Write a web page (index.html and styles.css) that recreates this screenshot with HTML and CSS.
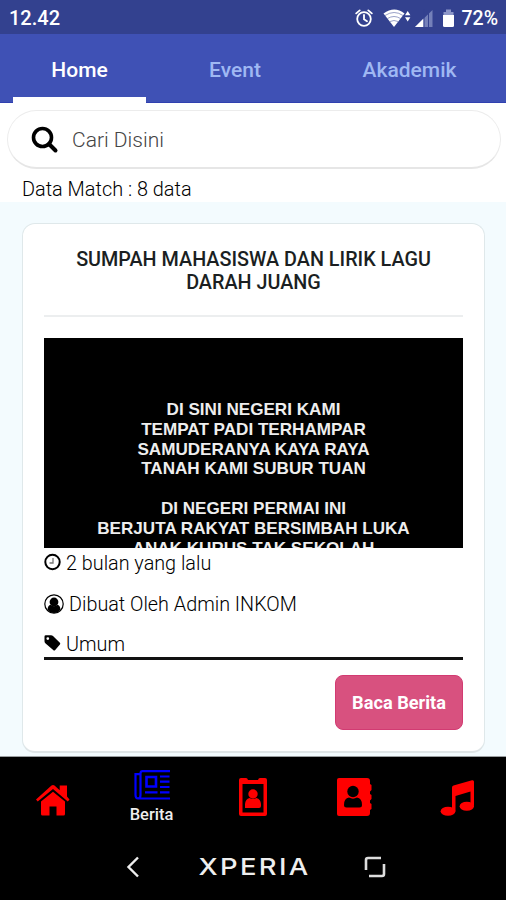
FILE: index.html
```html
<!DOCTYPE html>
<html lang="id">
<head>
    <meta charset="UTF-8">
    <title>Berita</title>
    <link rel="stylesheet" href="styles.css">
</head>
<body>
<div class="phone">
    <div class="status">
        <span class="time">12.42</span>
        <svg class="status-icons" width="102" height="24" viewBox="0 0 102 24">
            <!-- alarm -->
            <g fill="none" stroke="#fff" stroke-width="1.8" stroke-linecap="round">
                <circle cx="9" cy="13" r="6.8"/>
                <path d="M9 9v4.3l3 2M1.2 7.4l3.5-3M16.8 7.4l-3.5-3"/>
            </g>
            <!-- wifi -->
            <path fill="#fff" d="M28.500 7.500Q39.500 -.5 49.500 7.500L39 21z"/>
            <path fill="none" stroke="#33418f" stroke-width=".5" d="M30 9.500q9.300-6 18 0M32.500 12.500q6.500-4 13 0M35 15.500q4-2 8 0"/>
            <path fill="#fff" d="M50 9.300l2.700-4.200 2.700 4.200zM50 11.300l2.700 4.200 2.700-4.200z"/>
            <!-- signal -->
            <path fill="#7480b9" d="M60 21L77.500 4v17z"/>
            <path fill="#fff" d="M60 21l8.500-8.500V21z"/>
            <path stroke="#33418f" d="M69 3v18M73.500 3v18"/>
            <!-- battery -->
            <path fill="#8c96c8" d="M88.500 9V6h2.500V3.500h5V6h2.500v3z"/>
            <path fill="#fff" d="M88 9h11v10.500a1.500 1.500 0 0 1-1.500 1.500h-8a1.500 1.500 0 0 1-1.500-1.500z"/>
        </svg>
        <span class="percent">72%</span>
    </div>
    <div class="tabs">
        <div class="tab active">Home</div>
        <div class="tab">Event</div>
        <div class="tab">Akademik</div>
    </div>
    <div class="top">
        <div class="search">
            <svg width="28" height="28" viewBox="0 0 28 28" fill="none" stroke="#000">
                <circle cx="11.500" cy="11.500" r="9" stroke-width="3.600"/>
                <path d="M18 18l6.500 6.500" stroke-width="4" stroke-linecap="round"/>
            </svg>
            <span class="placeholder">Cari Disini</span>
        </div>
        <div class="match">Data Match : 8 data</div>
    </div>
    <div class="list">
        <div class="card">
            <h2 class="title">SUMPAH MAHASISWA DAN LIRIK LAGU DARAH JUANG</h2>
            <div class="picture">
                <p>DI SINI NEGERI KAMI</p>
                <p>TEMPAT PADI TERHAMPAR</p>
                <p>SAMUDERANYA KAYA RAYA</p>
                <p>TANAH KAMI SUBUR TUAN</p>
                <p>&nbsp;</p>
                <p>DI NEGERI PERMAI INI</p>
                <p>BERJUTA RAKYAT BERSIMBAH LUKA</p>
                <p>ANAK KURUS TAK SEKOLAH</p>
            </div>
            <div class="meta">
                <svg width="17" height="18" viewBox="0 0 17 18" fill="none" stroke="#000">
                    <circle cx="8.500" cy="9" r="7.200" stroke-width="2"/>
                    <path d="M9 5v5H5.500" stroke="#777" stroke-width="1.300"/>
                </svg>
                <span class="when">2 bulan yang lalu</span>
            </div>
            <div class="meta">
                <svg width="20" height="20" viewBox="0 0 20 20">
                    <circle cx="10" cy="10" r="9.200" fill="none" stroke="#000" stroke-width="1.200"/>
                    <circle cx="10" cy="8" r="4.400"/>
                    <path d="M3.500 15.500q.3-4 3.200-4.700 3.300 2.800 6.600 0 2.900.7 3.200 4.700Q14 19 10 19t-6.500-3.500z"/>
                </svg>
                <span class="author">Dibuat Oleh Admin INKOM</span>
            </div>
            <div class="meta">
                <svg width="17" height="18" viewBox="0 0 17 18">
                    <path fill-rule="evenodd" d="M.5 2.500a1.300 1.300 0 0 1 1.300-1.300H7q1.200 0 2 .8l6.900 6.700q.8.900 0 1.800l-4.700 5.500q-1 1-2 0L1.600 9.400Q.5 8.400.5 7.200zM3.800 3.200a1.400 1.400 0 1 0 0 2.800 1.400 1.400 0 0 0 0-2.800z"/>
                </svg>
                <span class="kind">Umum</span>
            </div>
            <div class="action">
                <button class="btn">Baca Berita</button>
            </div>
        </div>
    </div>
    <div class="nav">
        <div class="item">
            <svg width="36" height="34" viewBox="0 0 36 34" fill="red">
                <path d="M1 16.500L16.500 2.600q1.500-1.300 3 0l5.200 4.600V2.500H32v11l2.500 3-1.700 2L18 6 2.700 18.500z"/>
                <path d="M6 18.500L18 8.700l12 9.800V31q0 1.500-1.500 1.500h-7v-9h-7v9h-7Q6 32.500 6 31z"/>
            </svg>
        </div>
        <div class="item current">
            <svg width="36" height="32" viewBox="0 0 36 32" fill="none" stroke="#00f" stroke-width="2.200">
                <path d="M36 2.200H8.500Q6.500 2.200 6.500 4.500V26q0 3.500-2.500 3.500T1.500 26V5.200h5M4 29.500h32"/>
                <path d="M12.500 8h9.500v9.500h-9.500z" stroke-width="2.600"/>
                <path d="M26 7.500h9.500M26 12.700h9.500M26 18h9.500M11 23.300h12.500M26 23.300h9.500"/>
            </svg>
            <span>Berita</span>
        </div>
        <div class="item">
            <svg width="30" height="40" viewBox="0 0 30 40" fill="red">
                <path fill-rule="evenodd" d="M3 1h5q1.500 0 2 2h10q.5-2 2-2h5q2 0 2 2v34q0 2-2 2H3q-2 0-2-2V3q0-2 2-2zM4.500 7v28.500h21V7z"/>
                <circle cx="15" cy="17" r="4.700"/>
                <path d="M7 31v-4q.5-5 4.500-6 3.500 2 7 0 4 1 4.500 6v2q0 2-2 2z"/>
            </svg>
        </div>
        <div class="item">
            <svg width="36" height="40" viewBox="0 0 36 40" fill="red">
                <path d="M3 1h28q3 0 3 3v3l1.500 1v5L34 14.500V17l1.500 1v4L34 23.500V26l1.500 1v5L34 33v3q0 3-3 3H3q-2 0-2-2V3q0-2 2-2z"/>
                <circle cx="17" cy="14.500" r="5.700" fill="#000"/>
                <path fill="#000" d="M8 28q0-7 5-7.500 4 2.300 8 0 5 .5 5 7.500 0 2.500-2.500 2.500h-13Q8 30.500 8 28z"/>
            </svg>
        </div>
        <div class="item">
            <svg width="36" height="38" viewBox="0 0 36 38" fill="red">
                <path d="M12 8.500q0-1.500 1.500-2L32 1.300q2-.5 2 1.500v24h-3.500V12.500L15.500 17v15H12z"/>
                <ellipse cx="8" cy="32.200" rx="7.400" ry="4.500"/>
                <ellipse cx="26.800" cy="27.200" rx="7.200" ry="4.500"/>
            </svg>
        </div>
    </div>
    <div class="system">
        <svg class="back" width="14" height="22" viewBox="0 0 14 22" fill="none" stroke="#eee" stroke-width="2.400">
            <path d="M12 1.500L2.500 11l9.500 9.500"/>
        </svg>
        <span class="brand">XPERIA</span>
        <svg class="recent" width="22" height="22" viewBox="0 0 22 22" fill="none" stroke="#ddd" stroke-width="2.600">
            <path d="M2 14V4q0-2 2-2h13M5 20h13q2 0 2-2V8"/>
        </svg>
    </div>
</div>
</body>
</html>
```
FILE: styles.css
```css
*{
    margin: 0;
    padding: 0;
    box-sizing: border-box;
}
body{
    font-family: Roboto, "Liberation Sans", sans-serif;
    background: #000;
}
svg{
    display: block;
    flex-shrink: 0;
}
.phone{
    width: 506px;
    height: 900px;
    display: flex;
    flex-direction: column;
    overflow: hidden;
}
.status{
    height: 34px;
    padding: 2px 8px 0 9px;
    display: flex;
    align-items: center;
    background: #33418f;
    color: #fff;
    font-size: 20px;
    font-weight: 500;
}
.status-icons{
    margin-left: auto;
    margin-right: 4px;
}
.percent{
    font-size: 19.500px;
}
.tabs{
    height: 69px;
    padding-left: 13px;
    display: grid;
    grid-template-columns: 133px 178px 171px;
    background: #3f51b5;
    border-bottom: 1px solid #3040b0;
}
.tab{
    text-align: center;
    font-size: 21px;
    font-weight: 500;
    line-height: 72px;
    color: #9fb8f3;
}
.tab.active{
    height: 69px;
    color: #fff;
    border-bottom: 6px solid #fff;
}
.top{
    height: 99px;
    padding: 7px 5px 0 7px;
    background: #fff;
}
.search{
    height: 59px;
    padding: 2px 0 0 23px;
    display: flex;
    align-items: center;
    border: 1px solid #ececec;
    border-bottom: 2px solid #e6e6e6;
    border-radius: 30px;
}
.placeholder{
    margin-left: 13px;
    font-size: 21px;
    font-weight: 300;
    color: #444;
}
.match{
    padding-left: 15px;
    font-size: 19.900px;
    font-weight: 300;
    line-height: 41px;
    color: #000;
}
.list{
    height: 555px;
    padding: 21px 21px 0 22px;
    background: #f3fbfe;
    border-bottom: 1px solid #9a9ea0;
}
.card{
    height: 530px;
    padding: 24px 21px 0;
    background: #fff;
    border: 1px solid #dfe8ea;
    border-bottom: 2px solid #dfe5e7;
    border-radius: 13px;
}
.title{
    height: 69px;
    padding: 0 20px;
    border-bottom: 2px solid #eceeef;
    text-align: center;
    font-size: 19.800px;
    font-weight: 500;
    line-height: 23px;
    color: #1b1f22;
}
.picture{
    height: 210px;
    margin-top: 21px;
    padding-top: 62px;
    overflow: hidden;
    background: #000;
    color: #eee;
    text-align: center;
    font: bold 17.100px/19.800px "Liberation Sans", Arial, sans-serif;
}
.meta{
    height: 40.500px;
    display: flex;
    align-items: flex-start;
    font-size: 19.800px;
    font-weight: 300;
    line-height: 31px;
    color: #000;
}
.meta svg{
    margin: 5px 5px 0 0;
}
.meta:nth-of-type(4){
    height: 28px;
}
.action{
    padding-top: 15px;
    display: flex;
    justify-content: flex-end;
    border-top: 3px solid #111;
}
.btn{
    width: 128px;
    height: 55px;
    border: 1px solid #d23b72;
    border-radius: 8px;
    background: #d8517f;
    color: #fff;
    font: bold 18.200px Roboto, sans-serif;
}
.nav{
    height: 85px;
    padding-bottom: 5px;
    display: grid;
    grid-template-columns: repeat(5, 101px);
    background: #000;
}
.item{
    display: flex;
    flex-direction: column;
    align-items: center;
    justify-content: center;
}
.item:first-child{
    padding: 5px 0 0 4px;
}
.item:last-child{
    padding: 2px 0 0 6px;
}
.current{
    justify-content: flex-start;
    padding-top: 12px;
    color: #eee;
    font-size: 16.500px;
    font-weight: 500;
    line-height: 27px;
}
.system{
    height: 58px;
    padding: 0 120px 8px 126px;
    display: flex;
    align-items: center;
    justify-content: space-between;
    background: #000;
}
.brand{
    padding-left: 4px;
    color: #eee;
    font: 500 23px/30px Inter, sans-serif;
    letter-spacing: 2px;
    transform: scaleX(1.190);
}
```
